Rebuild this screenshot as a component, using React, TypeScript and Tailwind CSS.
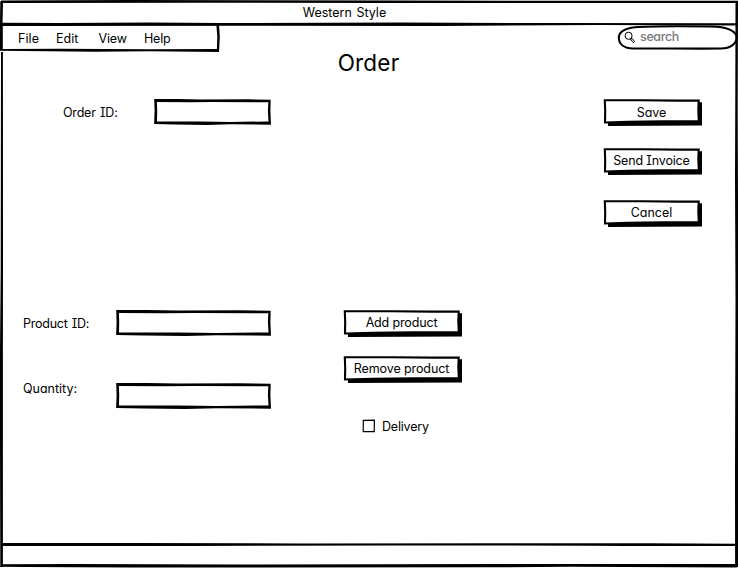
import type { ReactNode } from 'react';

function WindowFrame() {
  return (
    <svg className="pointer-events-none absolute inset-0" width="738" height="568" fill="#000">
      <path d="M1 0.6 L130 0 L410 0.6 L738 0.8 V3 H380 L200 2.7 L1 3.1Z" />
      <path d="M0.3 1 L3 2 L2.5 24 H0Z" />
      <path d="M0 22.8 L60 23.1 L150 22.6 L220 23 L400 22.6 L560 23.1 L738 23.3 V25.4 L600 25.1 L440 25.9 L220 25.7 L0 25Z" />
      <path d="M1 52 H2.9 L3 270 L2.9 355 L2.9 567 H0.3 L0 440 L0 350 L0.7 270Z" />
      <path d="M735.5 2 H738 L737.7 110 L738 200 V567 H735.1 L735 470 L735.5 300 L735 180 L735.3 90Z" />
      <path d="M2 543 H133 L300 543.4 L500 543.2 L648 543.2 L736 543.7 V546 H627 L585 545.7 L400 545.5 L190 545.9 L2 546Z" />
      <path d="M2 564.2 L70 564 L240 564.6 L500 564 L737 564.1 V567.4 L570 566.8 L490 567.3 L130 567.5 L25 567 L0 566.7Z" />
    </svg>
  );
}

function MenuBar() {
  return (
    <nav className="relative h-[28px] w-[220px] shrink-0">
      <svg className="absolute inset-0 overflow-visible" width="220" height="28">
        <path fillRule="evenodd" d="M0 -1 L80 -0.8 L219 -0.9 L219.8 12 L219 27.1 L150 26.3 L95 26.7 L0 25.7Z M2.8 1 L60 1 L216.4 0.4 L217.3 12 L216.9 24 L150 24.2 L60 23.8 L2.8 24Z" />
      </svg>
      <div className="relative flex h-[28px] items-center pl-[18px] leading-none">
        <span className="w-[38px] tracking-[0.1px]">File</span>
        <span className="w-[42.5px]">Edit</span>
        <span className="w-[45.5px] tracking-[-0.15px]">View</span>
        <span className="tracking-[-0.2px]">Help</span>
      </div>
    </nav>
  );
}

function SearchField() {
  return (
    <div className="relative ml-auto h-[25px] w-[121px]">
      <svg className="absolute inset-0 overflow-visible" width="121" height="25" fill="none" stroke="#000">
        <path d="M18 2.2 C35 0.8 85 1.2 100 1.7 C112 2.6 119.7 7 119.7 12.5 C119.7 19 113 23.2 104 23.5 C75 24 40 23.2 16 23.5 C7 23.2 2 19 1.8 13 C1.8 7.5 7 3.4 18 2.2Z" strokeWidth="2.1" />
        <ellipse cx="11.6" cy="10.8" rx="3.5" ry="3.6" strokeWidth="1" />
        <path d="M13.5 14.2 L15.2 13.4 L17.6 16.6 L16.3 17.6Z" strokeWidth="1" />
      </svg>
      <span className="absolute left-[23px] top-[4px] text-[12.5px] font-medium leading-4 tracking-[-0.35px] text-[#7b7b7b]">search</span>
    </div>
  );
}

function TextInput({ width }: { width: number }) {
  const w = width;
  return (
    <div className="relative h-[26px] shrink-0" style={{ width: w }}>
      <svg className="absolute inset-0" width={w} height="26">
        <path
          fillRule="evenodd"
          d={`M0.2 0 L${w * 0.2} 0.1 L${w * 0.4} 0.6 L${w * 0.8} 0.3 L${w - 0.3} 0.7 L${w - 0.6} 12 L${w} 25.7 L${w * 0.65} 25.2 L${w * 0.45} 26 L${w * 0.18} 25.5 L0.1 24.9 L0.6 12Z M2.9 3 L${w * 0.3} 3.2 L${w * 0.5} 2.9 L${w - 2.7} 3.3 L${w - 3.1} 12 L${w - 2.5} 22.4 L${w * 0.65} 23 L${w * 0.4} 22.4 L3 22.4 L3.2 12Z`}
        />
      </svg>
    </div>
  );
}

function Button({ width, children }: { width: number; children: ReactNode }) {
  const w = width;
  return (
    <button className="relative block h-[27px] shrink-0" style={{ width: w }}>
      <svg className="absolute inset-0" width={w} height="27">
        <path d={`M5 4 L${w} 3.2 V26.5 L5 26.9Z`} />
        <path d={`M1.8 1.3 L${w * 0.4} 1.2 L${w * 0.75} 1.6 L${w - 3.3} 1.5 L${w - 3.7} 11 L${w - 3.2} 22 L${w * 0.6} 22.4 L${w * 0.25} 22.8 L2 23.5 L2.2 12Z`} fill="#fff" stroke="#000" strokeWidth="2.1" />
      </svg>
      <span className="relative flex h-[24px] items-center justify-center whitespace-nowrap pr-[2px] leading-none">{children}</span>
    </button>
  );
}

export default function App() {
  return (
    <div className="relative flex h-[568px] w-[738px] flex-col overflow-hidden bg-white font-[Inter,sans-serif] text-[12.5px] text-black [font-feature-settings:'cv11','cv08'] [word-spacing:1px]">
      <WindowFrame />
      <header className="flex h-[25px] shrink-0 items-center justify-center pr-[49px] pt-[2px] leading-none">Western Style</header>
      <div className="flex h-[25px] shrink-0">
        <MenuBar />
        <SearchField />
      </div>
      <h1 className="h-[26px] shrink-0 pr-[1px] text-center text-[22.5px] leading-[26px] tracking-[0.2px]">Order</h1>
      <main className="flex min-h-0 grow">
        <section className="w-[343px] shrink-0 pt-[23px]">
          <div className="flex h-[26px] pl-[63px]">
            <span className="w-[91px] leading-[28px] tracking-[-0.2px]">Order ID:</span>
            <TextInput width={117} />
          </div>
          <div className="mt-[185px] flex h-[26px] pl-[23px]">
            <span className="w-[93px] leading-[28px] tracking-[-0.25px]">Product ID:</span>
            <TextInput width={155} />
          </div>
          <div className="mt-[47px] flex pl-[23px]">
            <span className="w-[93px] leading-[12px]">Quantity:</span>
            <TextInput width={155} />
          </div>
        </section>
        <section className="w-[260px] shrink-0 pt-[234px]">
          <Button width={119}><span className="tracking-[-0.15px]">Add product</span></Button>
          <div className="h-[19px]" />
          <Button width={119}><span className="tracking-[-0.1px]">Remove product</span></Button>
          <label className="mt-[35px] flex items-center pl-[19px] leading-[14px]">
            <svg width="14" height="14" fill="none" stroke="#000" className="mr-[6px] shrink-0">
              <path d="M1.3 1.4 L12.4 1.2 L12.2 12.6 L1.2 12.7Z" strokeWidth="1.2" />
            </svg>
            <span className="pt-[2px] tracking-[-0.2px]">Delivery</span>
          </label>
        </section>
        <aside className="flex w-[135px] shrink-0 flex-col pt-[23px]">
          <Button width={99}><span className="pt-[2px]">Save</span></Button>
          <div className="h-[22px]" />
          <Button width={99}><span className="tracking-[-0.15px]">Send Invoice</span></Button>
          <div className="h-[25px]" />
          <Button width={99}>Cancel</Button>
        </aside>
      </main>
      <footer className="h-[25px] shrink-0" />
    </div>
  );
}
